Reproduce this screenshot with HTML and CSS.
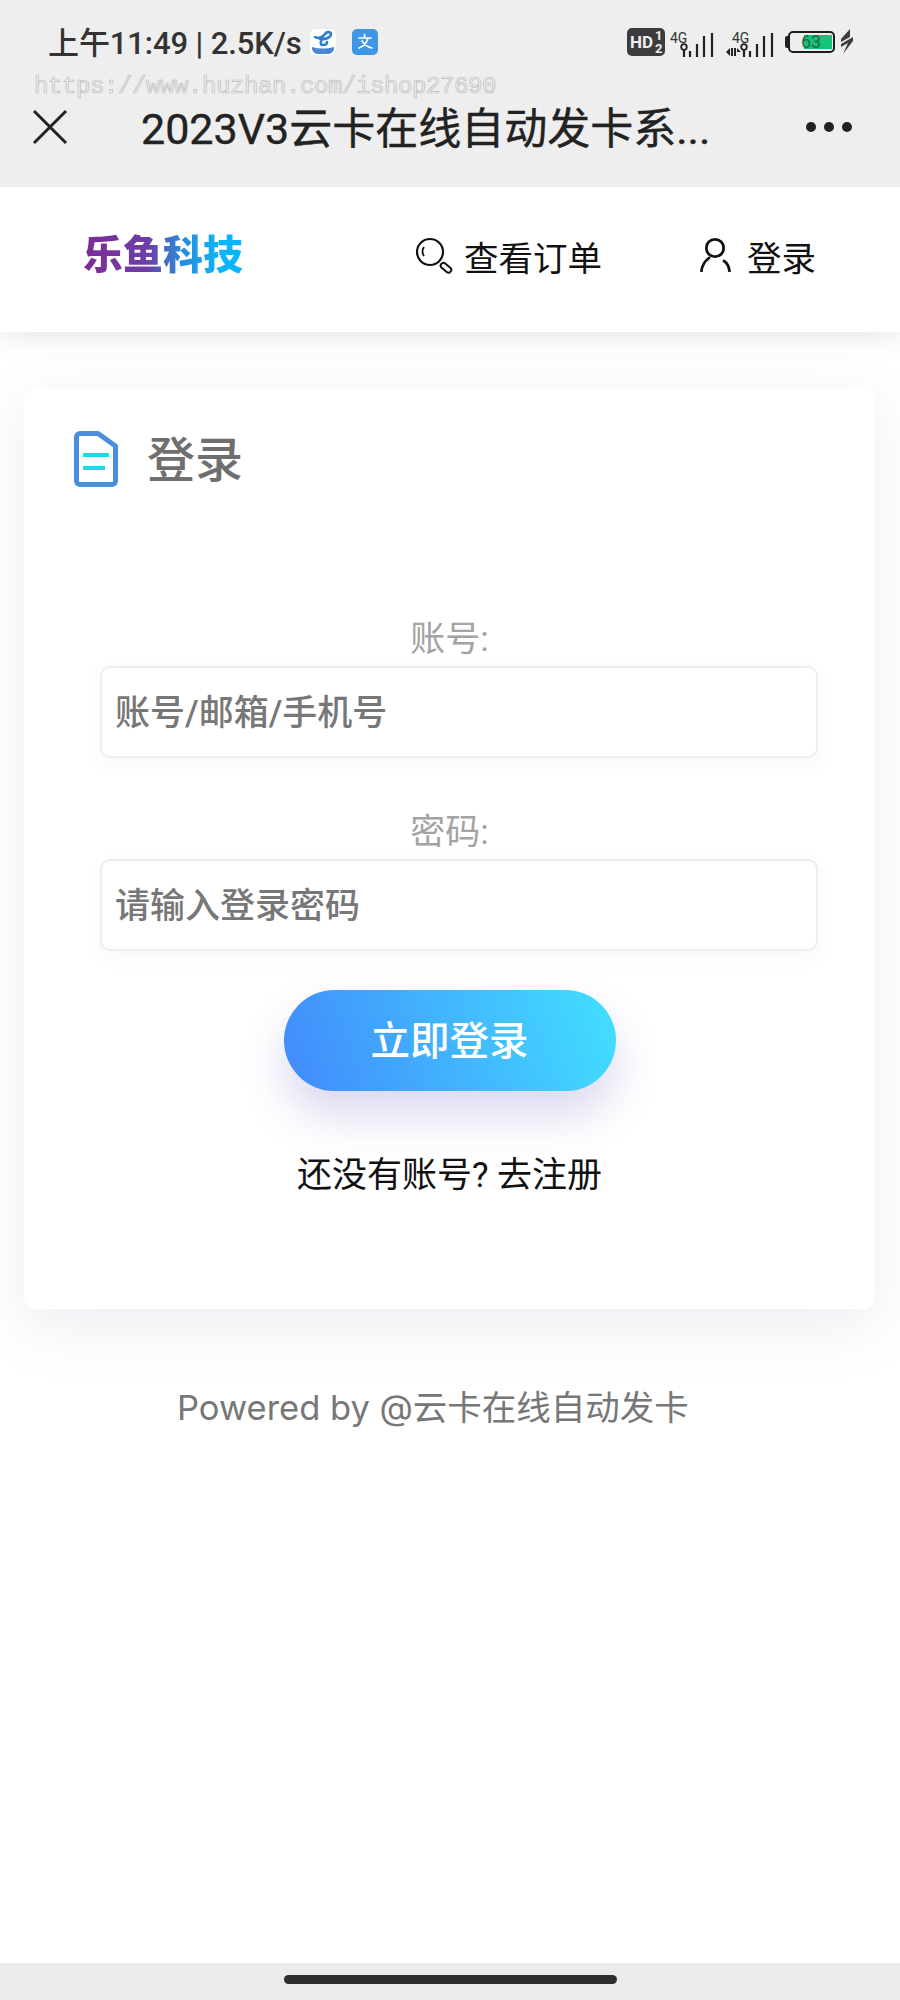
FILE: index.html
```html
<!DOCTYPE html>
<html lang="zh">
<head>
    <meta charset="UTF-8">
    <meta name="viewport" content="width=device-width, initial-scale=1.0">
    <title>登录</title>
    <link rel="stylesheet" href="styles.css">
</head>
<body>
    <div class="top">
        <div class="status">
            <div class="status-left">
                <span class="status-text">上午11:49 | 2.5K/s</span>
                <svg class="app-icon" width="26" height="26" viewBox="0 0 26 26">
                    <rect width="26" height="26" rx="6" fill="#fff"/>
                    <path d="M2 18q11 3 22 0v2q-1 4-5 5H7q-4-1-5-5z" fill="#4a86d4"/>
                    <path d="M5 8c3 2 8 0 10-3 2-3 6-2 6 0 0 3-5 6-11 5M13 9c-3 3-3 7 0 7 2 0 4-1 4-3" fill="none" stroke="#2f7fd1" stroke-width="2.6" stroke-linecap="round"/>
                </svg>
                <svg class="app-icon app-icon-pay" width="26" height="26" viewBox="0 0 26 26">
                    <rect width="26" height="26" rx="5" fill="#3d97e6"/>
                    <path d="M7 9h12M12.500 5.500V9M16 9c-1 4-4 8-9 10M10 12c2 3 5 6 10 7" fill="none" stroke="#fff" stroke-width="1.7" stroke-linecap="round"/>
                </svg>
            </div>
            <div class="status-right">
                <svg width="38" height="28" viewBox="0 0 38 28">
                    <rect width="38" height="28" rx="5" fill="#3c3c3c"/>
                    <text x="3" y="20" class="hd-text">HD</text>
                    <text x="28" y="12" class="hd-num">1</text>
                    <text x="28" y="25" class="hd-num">2</text>
                </svg>
                <svg class="signal signal-one" width="46" height="32" viewBox="0 -5 46 32">
                    <text x="0" y="11" class="net-text">4G</text>
                    <circle cx="14" cy="15" r="2.800" fill="none" stroke="#222" stroke-width="1.800"/>
                    <path d="M14 18v7" stroke="#222" stroke-width="2.200"/>
                    <path d="M20 19v6M27 12v13M34 4v21M42 1v24" stroke="#222" stroke-width="2.200"/>
                </svg>
                <svg class="signal signal-two" width="50" height="32" viewBox="0 -5 50 32">
                    <text x="6" y="11" class="net-text">4G</text>
                    <path d="M0 20l4-4v8zM5 16h2v8H5zM8 16h2v8H8zM11 16l4 4-4 0z" fill="#222"/>
                    <circle cx="18" cy="15" r="2.800" fill="none" stroke="#222" stroke-width="1.800"/>
                    <path d="M18 18v7" stroke="#222" stroke-width="2.200"/>
                    <path d="M24 19v6M31 12v13M38 4v21M46 1v24" stroke="#222" stroke-width="2.200"/>
                </svg>
                <div class="battery">
                    <span class="battery-cap"></span>
                    <div class="battery-body">
                        <span class="battery-fill"></span>
                        <span class="battery-num">63</span>
                    </div>
                </div>
                <svg class="bolt" width="14" height="25" viewBox="0 0 14 25">
                    <path d="M10 0L1 10v3l9-5zM13 8L1 15v3l7-4-5 11 10-13z" fill="#3c3c3c"/>
                </svg>
            </div>
        </div>
        <div class="title-row">
            <svg class="close" width="36" height="36" viewBox="0 0 36 36">
                <path d="M2 2l32 32M34 2L2 34" stroke="#222" stroke-width="3"/>
            </svg>
            <div class="title">2023V3云卡在线自动发卡系...</div>
            <div class="more"><i></i><i></i><i></i></div>
        </div>
        <div class="watermark">https://www.huzhan.com/ishop27690</div>
    </div>

    <div class="nav">
        <a class="logo">乐鱼科技</a>
        <div class="nav-links">
            <a class="nav-link nav-search">
                <svg width="37" height="37" viewBox="0 0 37 37">
                    <circle cx="14" cy="15" r="13" fill="none" stroke="#111" stroke-width="2.200"/>
                    <path d="M8 10c-2 3-2 6 0 9" fill="none" stroke="#111" stroke-width="1.800"/>
                    <rect x="24" y="28" width="12" height="5.500" rx="2.700" transform="rotate(40 30 30.700)" fill="#fff" stroke="#111" stroke-width="2"/>
                </svg>
                查看订单
            </a>
            <a class="nav-link nav-user">
                <svg width="32" height="35" viewBox="0 0 32 35">
                    <circle cx="15" cy="11" r="8.700" fill="none" stroke="#111" stroke-width="2.800"/>
                    <path d="M1.500 34C2 28 5 24 9 21M29.500 34C29 30 27 26 24 24" fill="none" stroke="#111" stroke-width="2.800" stroke-linecap="round"/>
                </svg>
                登录
            </a>
        </div>
    </div>

    <div class="card">
        <div class="card-head">
            <svg width="44" height="56" viewBox="0 0 44 56">
                <path d="M6 2.500h18L41.500 15v35a3.500 3.500 0 0 1-3.500 3.500H6A3.500 3.500 0 0 1 2.500 50V6A3.500 3.500 0 0 1 6 2.500z" fill="#fff" stroke="#4a8fdb" stroke-width="5" stroke-linejoin="round"/>
                <path d="M9 24h26M9 37h22" stroke="#22d5ea" stroke-width="4"/>
            </svg>
            <h2>登录</h2>
        </div>
        <form class="form">
            <label class="field-label" for="account">账号:</label>
            <input class="field" id="account" type="text" placeholder="账号/邮箱/手机号">
            <label class="field-label field-label-second" for="password">密码:</label>
            <input class="field" id="password" type="text" placeholder="请输入登录密码">
            <button class="submit" type="button">立即登录</button>
            <p class="register">还没有账号? 去注册</p>
        </form>
    </div>

    <p class="powered">Powered by @云卡在线自动发卡</p>

    <div class="bottom"><span class="home-bar"></span></div>
</body>
</html>
```

FILE: styles.css
```css
*{
    margin: 0;
    padding: 0;
    box-sizing: border-box;
}
body{
    min-height: 2000px;
    display: flex;
    flex-direction: column;
    background-color: #fff;
    font-family: Roboto, "Noto Sans CJK SC", sans-serif;
}
.top{
    position: relative;
    height: 187px;
    background-color: #eee;
}
.status{
    height: 83px;
    padding: 0 46px 0 48px;
    display: flex;
    justify-content: space-between;
    align-items: center;
}
.status-left, .status-right{
    display: flex;
    align-items: center;
}
.status-text{
    padding-bottom: 3px;
    font-size: 31px;
    font-weight: 500;
    letter-spacing: -0.1px;
    color: #333;
}
.app-icon{
    margin-left: 8px;
}
.app-icon-pay{
    margin-left: 16px;
}
.hd-text{
    font: bold 17px Roboto, sans-serif;
    fill: #eee;
}
.hd-num{
    font: bold 13px Roboto, sans-serif;
    fill: #eee;
}
.net-text{
    font: 14px Roboto, sans-serif;
    fill: #333;
}
.signal{
    margin-bottom: -2px;
}
.signal-one{
    margin-left: 5px;
}
.signal-two{
    margin-left: 10px;
}
.battery{
    display: flex;
    align-items: center;
    margin-left: 9px;
}
.bolt{
    margin-left: 5px;
}
.battery-cap{
    width: 3px;
    height: 12px;
    border-radius: 2px 0 0 2px;
    background-color: #222;
}
.battery-body{
    position: relative;
    width: 47px;
    height: 22px;
    padding: 2px;
    border: 2px solid #1d1d1d;
    border-radius: 5px;
}
.battery-fill{
    display: block;
    width: 28px;
    height: 14px;
    margin-left: 12px;
    background-color: #14c27a;
}
.battery-num{
    position: absolute;
    left: 11px;
    top: -3px;
    font-size: 18px;
    line-height: 24px;
    color: #1d6b4a;
}
.title-row{
    display: flex;
    align-items: center;
    height: 84px;
    padding: 0 48px 0 32px;
}
.close{
    flex: none;
    margin-top: 3px;
}
.title{
    flex: 1;
    margin-left: 73px;
    font-size: 43px;
    color: #222;
    white-space: nowrap;
    -webkit-text-stroke: 0.4px #222;
}
.more{
    display: flex;
    gap: 8px;
    margin-top: 3px;
}
.more i{
    width: 10px;
    height: 10px;
    border-radius: 50%;
    background-color: #222;
}
.watermark{
    position: absolute;
    left: 34px;
    top: 72px;
    font-family: "Liberation Mono", monospace;
    font-size: 24px;
    line-height: 30px;
    letter-spacing: -0.4px;
    color: transparent;
    -webkit-text-stroke: 0.7px #bdbdbd;
    white-space: nowrap;
}
.nav{
    height: 145px;
    padding: 0 84px 0 83px;
    display: flex;
    justify-content: space-between;
    align-items: center;
    background-color: #fff;
    box-shadow: 0 4px 24px rgba(90, 100, 120, 0.16);
}
.logo{
    margin-bottom: 16px;
    font-size: 40px;
    font-weight: 900;
    background-image: linear-gradient(90deg, #7d2c96 0%, #6d3ea6 40%, #2f86d8 60%, #0ab5fb 85%);
    -webkit-background-clip: text;
    background-clip: text;
    color: transparent;
}
.nav-links{
    display: flex;
    align-items: center;
    gap: 98px;
    margin-bottom: 8px;
}
.nav-link{
    display: flex;
    align-items: center;
    font-size: 34.500px;
    color: #111;
}
.nav-search svg{
    margin: -1px 11px 0 0;
}
.nav-user svg{
    margin: -3px 15px 0 0;
}
.card{
    margin: 57px 25px 0 24px;
    height: 920px;
    padding-top: 42px;
    border-radius: 12px;
    background-color: #fff;
    box-shadow: 0 16px 60px rgba(100, 115, 150, 0.13);
}
.card-head{
    display: flex;
    align-items: center;
    padding-left: 50px;
    height: 56px;
}
.card-head h2{
    margin: 3px 0 0 29px;
    font-size: 48px;
    font-weight: 500;
    line-height: 58px;
    color: #6f6f6f;
}
.form{
    display: flex;
    flex-direction: column;
    align-items: center;
    margin-top: 128px;
}
.field-label{
    font-size: 35px;
    line-height: 50px;
    color: #a3a3a3;
}
.field-label-second{
    margin-top: 50px;
}
.field{
    align-self: flex-start;
    width: 718px;
    height: 92px;
    margin: 1px 0 0 76px;
    padding: 3px 13px 0;
    border: 2px solid #eee;
    border-radius: 10px;
    outline: none;
    background-color: #fff;
    box-shadow: 0 6px 18px rgba(100, 115, 150, 0.06);
    font-family: inherit;
    font-size: 35px;
    font-weight: 500;
}
.field::placeholder{
    color: #777;
    opacity: 1;
}
.submit{
    width: 332px;
    height: 101px;
    margin-top: 39px;
    padding-bottom: 6px;
    border: none;
    border-radius: 51px;
    background-image: linear-gradient(70deg, #4289fb 0%, #42e0ff 100%);
    box-shadow: 0 24px 44px rgba(100, 90, 190, 0.24);
    color: #fff;
    font-family: inherit;
    font-size: 39.500px;
    font-weight: 500;
}
.register{
    margin-top: 60px;
    font-size: 35px;
    line-height: 50px;
    color: #111;
}
.powered{
    margin-top: 74px;
    padding-left: 177px;
    font-family: Inter, "Noto Sans CJK SC", sans-serif;
    font-size: 34.500px;
    line-height: 50px;
    color: #777;
}
.bottom{
    margin-top: auto;
    height: 37px;
    padding-top: 12px;
    display: flex;
    justify-content: center;
    background-color: #ebebeb;
}
.home-bar{
    width: 333px;
    height: 9px;
    border-radius: 5px;
    background-color: #2e2e2e;
}
```
